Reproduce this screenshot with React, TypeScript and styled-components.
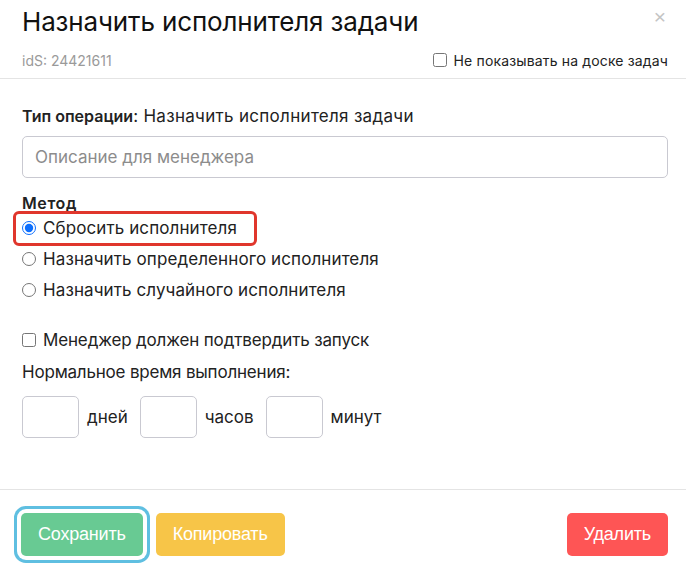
import React from "react";
import styled, { createGlobalStyle } from "styled-components";

const GlobalStyle = createGlobalStyle`
  html, body {
    margin: 0;
    padding: 0;
    background: #ffffff;
  }
  body {
    font-family: 'Inter', 'Noto Sans', sans-serif;
    color: #222222;
  }
  * {
    box-sizing: border-box;
  }
`;

const Modal = styled.div`
  width: 686px;
  height: 567px;
  background: #ffffff;
  display: flex;
  flex-direction: column;
`;

const Header = styled.div`
  padding: 6px 18px 0 22px;
`;

const TitleRow = styled.div`
  display: flex;
  justify-content: space-between;
  align-items: flex-start;
`;

const Title = styled.h1`
  margin: 0;
  font-size: 26px;
  font-weight: 400;
  line-height: 32px;
  color: #111111;
  letter-spacing: -0.15px;
`;

const Close = styled.button`
  border: none;
  background: none;
  padding: 0;
  margin: 0 2px 0 0;
  font-family: 'Liberation Sans', sans-serif;
  font-size: 21px;
  line-height: 21px;
  color: #c4c4c4;
  cursor: pointer;
`;

const MetaRow = styled.div`
  display: flex;
  justify-content: space-between;
  align-items: center;
  height: 20px;
  margin-top: 12px;
`;

const IdText = styled.span`
  font-size: 14px;
  color: #9a9a9a;
`;

const CheckLabel = styled.label<{ $size?: number; $spacing?: number }>`
  display: inline-flex;
  align-items: center;
  gap: 7px;
  font-size: ${(p) => p.$size ?? 17}px;
  letter-spacing: ${(p) => p.$spacing ?? 0}px;
  color: #222222;
  cursor: pointer;
`;

const Checkbox = styled.input.attrs({ type: "checkbox" })`
  width: 14px;
  height: 14px;
  margin: 0;
  accent-color: #0d6efd;
`;

const Divider = styled.div`
  height: 1px;
  background: #e4e4e4;
`;

const Body = styled.div`
  flex: 1;
  padding: 25px 18px 0 22px;
  display: flex;
  flex-direction: column;
`;

const OperationLine = styled.div`
  font-size: 17px;
  line-height: 24px;
  letter-spacing: 0.3px;
  b {
    font-size: 16px;
    font-weight: 600;
    letter-spacing: 0;
  }
`;

const TextInput = styled.input`
  margin-top: 8px;
  height: 42px;
  width: 100%;
  border: 1px solid #c9c9d1;
  border-radius: 5px;
  padding: 0 12px;
  font-family: inherit;
  font-size: 17px;
  color: #222222;
  &::placeholder {
    color: #8c8c8c;
  }
`;

const SectionTitle = styled.div`
  margin-top: 14px;
  font-size: 16px;
  font-weight: 600;
  line-height: 22px;
  letter-spacing: 0.6px;
`;

const RadioList = styled.div`
  display: flex;
  flex-direction: column;
  gap: 9px;
  margin-top: 3px;
`;

const RadioRow = styled.label<{ $marked?: boolean }>`
  position: relative;
  display: inline-flex;
  align-self: flex-start;
  align-items: center;
  gap: 7px;
  height: 22px;
  font-size: 17px;
  letter-spacing: 0.1px;
  cursor: pointer;

  ${(p) =>
    p.$marked &&
    `
    &::after {
      content: "";
      position: absolute;
      left: -9px;
      right: -20px;
      top: -6px;
      bottom: -7px;
      border: 3px solid #e0362c;
      border-radius: 6px;
      pointer-events: none;
    }
  `}
`;

const Radio = styled.input.attrs({ type: "radio" })`
  width: 14px;
  height: 14px;
  margin: 0;
  accent-color: #0d6efd;
`;

const ConfirmRow = styled.div`
  margin-top: 28px;
  height: 22px;
  display: flex;
  align-items: center;
`;

const PlainText = styled.div`
  margin-top: 10px;
  font-size: 17px;
  line-height: 22px;
  letter-spacing: -0.2px;
`;

const TimeRow = styled.div`
  margin-top: 13px;
  display: flex;
  align-items: center;
  gap: 8px;
`;

const TimeInput = styled.input`
  width: 57px;
  height: 42px;
  border: 1px solid #c9c9d1;
  border-radius: 5px;
  padding: 0 8px;
  font-family: inherit;
  font-size: 16px;
`;

const TimeLabel = styled.span`
  font-size: 17px;
  margin-right: 4px;
`;

const Footer = styled.div`
  display: flex;
  align-items: center;
  gap: 13px;
  padding: 23px 18px 11px 21px;
`;

const Button = styled.button<{ $color: string; $focused?: boolean }>`
  height: 43px;
  padding: 0 17px;
  border: none;
  border-radius: 5px;
  background: ${(p) => p.$color};
  color: #ffffff;
  font-family: 'Liberation Sans', Arial, sans-serif;
  font-size: 18px;
  letter-spacing: -0.2px;
  cursor: pointer;
  box-shadow: ${(p) =>
    p.$focused ? "0 0 0 4px #ffffff, 0 0 0 7px #5fbfe1" : "none"};
`;

const Spacer = styled.div`
  flex: 1;
`;

export default function App() {
  return (
    <>
      <GlobalStyle />
      <Modal>
        <Header>
          <TitleRow>
            <Title>Назначить исполнителя задачи</Title>
            <Close aria-label="Закрыть">×</Close>
          </TitleRow>
          <MetaRow>
            <IdText>idS: 24421611</IdText>
            <CheckLabel $size={14} $spacing={0.15}>
              <Checkbox />
              Не показывать на доске задач
            </CheckLabel>
          </MetaRow>
        </Header>
        <Divider style={{ marginTop: 8 }} />
        <Body>
          <OperationLine>
            <b>Тип операции</b>: Назначить исполнителя задачи
          </OperationLine>
          <TextInput placeholder="Описание для менеджера" />
          <SectionTitle>Метод</SectionTitle>
          <RadioList>
            <RadioRow $marked>
              <Radio name="method" defaultChecked />
              Сбросить исполнителя
            </RadioRow>
            <RadioRow>
              <Radio name="method" />
              Назначить определенного исполнителя
            </RadioRow>
            <RadioRow>
              <Radio name="method" />
              Назначить случайного исполнителя
            </RadioRow>
          </RadioList>
          <ConfirmRow>
            <CheckLabel $spacing={-0.15}>
              <Checkbox />
              Менеджер должен подтвердить запуск
            </CheckLabel>
          </ConfirmRow>
          <PlainText>Нормальное время выполнения:</PlainText>
          <TimeRow>
            <TimeInput />
            <TimeLabel>дней</TimeLabel>
            <TimeInput />
            <TimeLabel>часов</TimeLabel>
            <TimeInput />
            <TimeLabel>минут</TimeLabel>
          </TimeRow>
        </Body>
        <Divider />
        <Footer>
          <Button $color="#68ca93" $focused>
            Сохранить
          </Button>
          <Button $color="#f7c548">Копировать</Button>
          <Spacer />
          <Button $color="#fe5555">Удалить</Button>
        </Footer>
      </Modal>
    </>
  );
}
